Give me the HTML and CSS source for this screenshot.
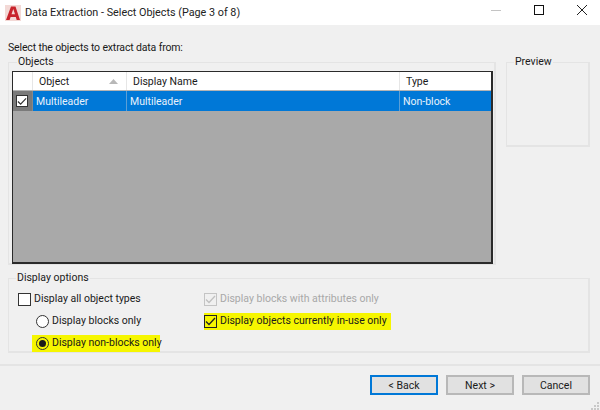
FILE: index.html
```html
<!DOCTYPE html>
<html lang="en">
<head>
<meta charset="utf-8">
<title>Data Extraction</title>
<link rel="stylesheet" href="styles.css">
</head>
<body>
<div class="window">
  <header class="titlebar">
    <svg class="app-icon" width="16" height="16" viewBox="0 0 16 16"><rect width="16" height="16" fill="#f3d9d6"/><path d="M1 15 6 1.500h4.500L15 15h-3.300l-.9-3H5.600l-1 3zM6.500 9.300h3.500L8.300 4z" fill="#c8242c" fill-rule="evenodd"/></svg>
    <span class="title">Data Extraction - Select Objects (Page 3 of 8)</span>
    <div class="caption">
      <svg width="20" height="25" viewBox="0 0 20 25"><path d="M5 10.500h10" stroke="#c4c4c4"/></svg>
      <svg width="20" height="25" viewBox="0 0 20 25"><rect x="5.500" y="5.500" width="9" height="9" fill="none" stroke="#111" stroke-width="1"/></svg>
      <svg width="20" height="25" viewBox="0 0 20 25"><path d="M5 5l10 10M15 5 5 15" stroke="#222" fill="none"/></svg>
    </div>
  </header>
  <main class="body">
    <p class="prompt">Select the objects to extract data from:</p>
    <div class="top">
      <fieldset class="group objects">
        <legend>Objects</legend>
        <div class="table">
          <div class="row head">
            <div class="c c0"></div>
            <div class="c c1"><span>Object</span><svg class="sort" width="9" height="5" viewBox="0 0 9 5"><path d="M4.500 0 9 5H0z" fill="#b8b8b8"/></svg></div>
            <div class="c c2"><span>Display Name</span></div>
            <div class="c c3"><span>Type</span></div>
          </div>
          <div class="row sel">
            <div class="c c0"><span class="tick"><svg width="11" height="9" viewBox="0 0 11 9"><path d="M1 4.500 4 7.500 10 1" fill="none" stroke="#333" stroke-width="1.300"/></svg></span></div>
            <div class="c c1">Multileader</div>
            <div class="c c2">Multileader</div>
            <div class="c c3">Non-block</div>
          </div>
          <div class="empty"></div>
        </div>
      </fieldset>
      <fieldset class="group preview">
        <legend>Preview</legend>
      </fieldset>
    </div>
    <fieldset class="group options">
      <legend>Display options</legend>
      <div class="opt-grid">
        <div class="opts">
          <label class="opt"><span class="box"></span>Display all object types</label>
          <label class="opt sub"><span class="radio"></span>Display blocks only</label>
          <label class="opt sub"><span class="hl"><span class="radio on"></span>Display non-blocks only</span></label>
        </div>
        <div class="opts">
          <label class="opt off"><span class="box dis"><svg width="11" height="9" viewBox="0 0 11 9"><path d="M1 4.500 4 7.500 10 1" fill="none" stroke="#c0c0c0" stroke-width="1.300"/></svg></span>Display blocks with attributes only</label>
          <label class="opt"><span class="hl"><span class="box dark"><svg width="11" height="9" viewBox="0 0 11 9"><path d="M1 4.500 4 7.500 10 1" fill="none" stroke="#222" stroke-width="1.300"/></svg></span>Display objects currently in-use only</span></label>
        </div>
      </div>
    </fieldset>
  </main>
  <footer class="footer">
    <button class="btn default">&lt; Back</button>
    <button class="btn">Next &gt;</button>
    <button class="btn">Cancel</button>
    <svg class="grip" width="10" height="10" viewBox="0 0 10 10"><path d="M7 2h2v2H7zM4 5h2v2H4zM7 5h2v2H7zM1 8h2v2H1zM4 8h2v2H4zM7 8h2v2H7z" fill="#c8c8c8"/></svg>
  </footer>
</div>
</body>
</html>
```
FILE: styles.css
```css
* { box-sizing: border-box; }
html, body { margin: 0; padding: 0; }
body { width: 600px; height: 410px; overflow: hidden; background: #f0f0f0; font-family: Roboto, "Noto Sans", sans-serif; font-size: 10.500px; color: #1a1a1a; }
.window { display: flex; flex-direction: column; height: 410px; }
.titlebar { display: flex; align-items: center; height: 25px; background: #fff; padding-left: 5px; flex: none; }
.app-icon { flex: none; }
.title { margin-left: 4px; font-size: 10.800px; color: #222; white-space: nowrap; }
.caption { margin-left: auto; display: flex; gap: 23px; padding-right: 8px; }
.caption svg { display: block; }
.body { padding: 0 10px 0 8px; flex: none; height: 339px; }
.prompt { margin: 0; padding-top: 16px; height: 35px; line-height: 14px; white-space: nowrap; letter-spacing: -0.15px; }
.top { display: flex; gap: 10px; }
.group { margin: 0; padding: 0; border: 2px solid #e4e4e4; min-width: 0; border-width: 1px 2px 2px 1px; }
.group legend { padding: 0 1px; margin-left: 7px; line-height: 12px; height: 12px; }
.objects { width: 488px; height: 209px; padding: 3px 2px 0 3px; margin-top: -4px; }
.objects legend { margin-left: 5px; }
.preview { width: 84px; height: 91px; margin-top: -4px; }
.table { height: 193px; border: 1px solid #2a2a2a; border-right-width: 2px; border-bottom-width: 2px; background: #a9a9a9; display: flex; flex-direction: column; width: 481px; }
.row { display: grid; grid-template-columns: 20px 94px 273px 1fr; flex: none; }
.head { height: 19px; background: #fff; border-bottom: 1px solid #b4b4b4; }
.head .c { padding: 1px 0 0 6px; display: flex; align-items: center; border-right: 1px solid #e6e6e6; }
.head .c0 { padding-left: 0; }
.head .c3 { border-right: 0; }
.sort { margin-left: auto; margin-right: 8px; }
.sel { height: 20px; background: #0078d7; color: #e8f2fb; }
.sel .c { display: flex; align-items: center; padding-left: 3px; border-right: 1px solid #5c9fd6; }
.sel .c0 { background: #7a7a7a; border-right: 1px solid #888; }
.sel .c3 { border-right: 0; }
.tick { display: flex; align-items: center; justify-content: center; width: 12px; height: 12px; background: #fff; border: 1px solid #333; }
.tick svg { display: block; }
.empty { flex: 1; }
.options { width: 582px; height: 81px; margin-top: 7px; }
.opt-grid { display: grid; grid-template-columns: 186px 1fr; padding-left: 9px; padding-top: 7px; }
.opts { display: flex; flex-direction: column; gap: 6px; }
.opt { display: flex; align-items: center; height: 16px; white-space: nowrap; line-height: 16px; }
.sub { padding-left: 18px; }
.off { color: #a8a8a8; }
.hl { display: inline-flex; align-items: center; background: #f6f600; height: 17px; }
.opts:first-child .hl { margin-left: -4px; padding-left: 4px; width: 128px; }
.opts:last-child .hl { padding-right: 4px; }
.box { width: 13px; height: 13px; background: #fff; border: 1px solid #333; margin-right: 3px; display: inline-flex; align-items: center; justify-content: center; flex: none; }
.box.dis { background: #f0f0f0; border-color: #c4c4c4; }
.box.dark { background: transparent; border-color: #222; }
.radio { width: 13px; height: 13px; border-radius: 50%; background: #fff; border: 1px solid #333; margin-right: 3px; position: relative; display: inline-block; flex: none; }
.radio.on { background: transparent; }
.radio.on::after { content: ""; position: absolute; left: 2px; top: 2px; width: 7px; height: 7px; border-radius: 50%; background: #1a1a1a; }
.footer { flex: none; height: 46px; border-top: 2px solid #e4e4e4; display: flex; justify-content: flex-end; gap: 8px; padding: 9px 10px 0 0; position: relative; }
.btn { width: 68px; height: 20px; border: 2px solid #b8b8b8; background: #e1e1e1; font: inherit; color: #1a1a1a; padding: 0; }
.btn.default { border-color: #0078d7; }
.grip { position: absolute; right: 0; bottom: 0; }
```
